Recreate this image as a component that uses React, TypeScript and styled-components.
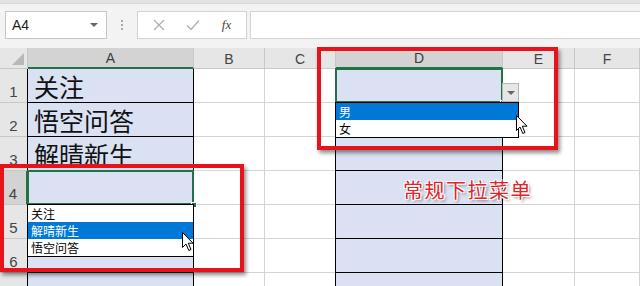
import React from "react";
import styled, { createGlobalStyle } from "styled-components";

const GlobalStyle = createGlobalStyle`
  html, body {
    margin: 0;
    padding: 0;
    background: #ffffff;
    overflow: hidden;
  }
  * { box-sizing: border-box; }
`;

const Page = styled.div`
  position: relative;
  width: 640px;
  height: 286px;
  overflow: hidden;
  background: #ffffff;
  font-family: "Liberation Sans", "Noto Sans CJK SC", sans-serif;
`;

const TopStrip = styled.div`
  height: 4px;
  background: #e3e3e3;
  border-bottom: 1px solid #d6d6d6;
`;

const Toolbar = styled.div`
  height: 44px;
  background: #f3f3f3;
  display: flex;
  align-items: flex-start;
  padding: 7px 0 0 5px;
`;

const NameBox = styled.div`
  width: 102px;
  height: 28px;
  background: #fff;
  border: 1px solid #c6c6c6;
  display: flex;
  align-items: center;
  justify-content: space-between;
  padding: 0 8px 0 6px;
  font-size: 14px;
  color: #222;
`;

const Caret = styled.span`
  width: 0;
  height: 0;
  border-left: 4px solid transparent;
  border-right: 4px solid transparent;
  border-top: 4px solid #666;
`;

const Dots = styled.div`
  width: 30px;
  height: 28px;
  display: flex;
  flex-direction: column;
  align-items: center;
  justify-content: center;
  gap: 2px;
  span {
    width: 2px;
    height: 2px;
    background: #a8a8a8;
  }
`;

const FxBox = styled.div`
  width: 110px;
  height: 28px;
  background: #fff;
  border: 1px solid #d4d4d4;
  display: flex;
  align-items: center;
  justify-content: space-around;
  padding: 0 4px;
  color: #b4b4b4;
`;

const FxText = styled.span`
  font-family: "Liberation Serif", serif;
  font-style: italic;
  font-size: 13px;
  color: #444;
`;

const Formula = styled.div`
  flex: 1;
  height: 28px;
  margin-left: 3px;
  background: #fff;
  border: 1px solid #d4d4d4;
  border-right: none;
`;

const Sheet = styled.div`
  display: grid;
  grid-template-columns: 28px 166px 71px 71px 167px 72px 1fr;
  grid-template-rows: 21px repeat(7, 34px);
`;

const Corner = styled.div`
  position: relative;
  background: #e6e6e6;
  border-right: 1px solid #c8c8c8;
  border-bottom: 1px solid #c8c8c8;
  &::after {
    content: "";
    position: absolute;
    right: 3px;
    bottom: 3px;
    width: 0;
    height: 0;
    border-left: 12px solid transparent;
    border-bottom: 12px solid #b8b8b8;
  }
`;

const ColHead = styled.div<{ $sel?: boolean }>`
  background: ${(p) => (p.$sel ? "#d3d3d3" : "#e6e6e6")};
  border-right: 1px solid #c8c8c8;
  border-bottom: ${(p) => (p.$sel ? "2px solid #217346" : "1px solid #c8c8c8")};
  display: flex;
  align-items: center;
  justify-content: center;
  font-size: 14px;
  color: ${(p) => (p.$sel ? "#3c3c3c" : "#444")};
  padding-top: 1px;
`;

const RowHead = styled.div<{ $sel?: boolean }>`
  background: ${(p) => (p.$sel ? "#d3d3d3" : "#e6e6e6")};
  border-right: ${(p) => (p.$sel ? "2px solid #217346" : "1px solid #c8c8c8")};
  border-bottom: 1px solid #c8c8c8;
  display: flex;
  align-items: flex-end;
  justify-content: center;
  padding-bottom: 2px;
  font-size: 15px;
  color: #444;
`;

const Cell = styled.div<{ $fill?: boolean; $sel?: boolean }>`
  position: relative;
  background: ${(p) => (p.$fill ? "#d9e1f2" : "#fff")};
  border-right: 1px solid ${(p) => (p.$fill ? "#000" : "#d4d4d4")};
  border-bottom: 1px solid ${(p) => (p.$fill ? "#000" : "#d4d4d4")};
  box-shadow: ${(p) => (p.$fill ? "-1px 0 0 #000" : "none")};
  font-family: "Noto Sans CJK SC", sans-serif;
  font-size: 25px;
  line-height: 34px;
  color: #111;
  padding-left: 6px;
  white-space: nowrap;
  ${(p) =>
    p.$sel &&
    `
    &::after {
      content: "";
      position: absolute;
      left: -1px;
      top: -1px;
      right: -1px;
      bottom: -1px;
      border: 2px solid #217346;
      pointer-events: none;
    }
  `}
`;

const Handle = styled.span`
  position: absolute;
  right: -4px;
  bottom: -4px;
  width: 6px;
  height: 6px;
  background: #217346;
  border: 1px solid #fff;
  z-index: 2;
`;

const List = styled.div<{ $w: number }>`
  position: absolute;
  left: -1px;
  top: 100%;
  width: ${(p) => p.$w}px;
  background: #fff;
  border: 1px solid #000;
  z-index: 3;
  padding: 0;
`;

const Item = styled.div<{ $hi?: boolean }>`
  height: 17px;
  line-height: 17px;
  padding-left: 3px;
  font-family: "Noto Sans CJK SC", sans-serif;
  font-size: 12px;
  background: ${(p) => (p.$hi ? "#0078d7" : "#fff")};
  color: ${(p) => (p.$hi ? "#fff" : "#000")};
`;

const DropButton = styled.div`
  position: absolute;
  left: 100%;
  bottom: 0;
  width: 17px;
  height: 19px;
  background: #e6e6e6;
  border: 1px solid #b5b5b5;
  display: flex;
  align-items: center;
  justify-content: center;
  z-index: 3;
`;

const Callout = styled.div<{ $x: number; $y: number; $w: number; $h: number }>`
  position: absolute;
  left: ${(p) => p.$x}px;
  top: ${(p) => p.$y}px;
  width: ${(p) => p.$w}px;
  height: ${(p) => p.$h}px;
  border: 4px solid #e8121a;
  box-shadow: 2px 3px 4px rgba(0, 0, 0, 0.45);
  z-index: 5;
`;

const Label = styled.div`
  position: absolute;
  left: 403px;
  top: 175px;
  font-family: "Noto Sans CJK SC", sans-serif;
  font-size: 20px;
  letter-spacing: 1.5px;
  color: #e2232a;
  text-shadow: 0 0 1px #fff, 1px 1px 0 #fff, -1px -1px 0 #fff, 1px -1px 0 #fff,
    -1px 1px 0 #fff, 2px 2px 3px rgba(0, 0, 0, 0.5);
  z-index: 6;
`;

const Pointer = styled.svg<{ $x: number; $y: number }>`
  position: absolute;
  left: ${(p) => p.$x}px;
  top: ${(p) => p.$y}px;
  z-index: 7;
`;

const Cursor = ({ x, y }: { x: number; y: number }) => (
  <Pointer $x={x} $y={y} width="13" height="20" viewBox="0 0 13 20">
    <path
      d="M0.5 0.5 L0.5 15.5 L4 12 L6.8 18.5 L9 17.5 L6.3 11.2 L11 11.2 Z"
      fill="#fff"
      stroke="#000"
      strokeWidth="1"
      strokeLinejoin="round"
    />
  </Pointer>
);

const cols = ["A", "B", "C", "D", "E", "F"];
const aText = ["关注", "悟空问答", "解晴新生", "", "", "", ""];

export default function App() {
  return (
    <Page>
      <GlobalStyle />
      <TopStrip />
      <Toolbar>
        <NameBox>
          A4
          <Caret />
        </NameBox>
        <Dots>
          <span />
          <span />
          <span />
        </Dots>
        <FxBox>
          <svg width="12" height="12" viewBox="0 0 12 12">
            <path d="M1 1 L11 11 M11 1 L1 11" stroke="#b0b0b0" strokeWidth="1.3" />
          </svg>
          <svg width="14" height="12" viewBox="0 0 14 12">
            <path d="M1 6.5 L5 10.5 L13 1.5" stroke="#b0b0b0" strokeWidth="1.3" fill="none" />
          </svg>
          <FxText>fx</FxText>
        </FxBox>
        <Formula />
      </Toolbar>
      <Sheet>
        <Corner />
        {cols.map((c) => (
          <ColHead key={c} $sel={c === "A" || c === "D"}>
            {c}
          </ColHead>
        ))}
        {aText.map((t, i) => {
          const row = i + 1;
          return (
            <React.Fragment key={row}>
              {/* row 7 is cut by the window edge; its number sits below */}
              <RowHead $sel={row === 4}>{row < 7 ? row : ""}</RowHead>
              <Cell $fill $sel={row === 4}>
                {t}
                {row === 4 && (
                  <>
                    <Handle />
                    <List $w={167}>
                      <Item>关注</Item>
                      <Item $hi>解晴新生</Item>
                      <Item>悟空问答</Item>
                    </List>
                  </>
                )}
              </Cell>
              <Cell />
              <Cell />
              <Cell $fill $sel={row === 1}>
                {row === 1 && (
                  <>
                    <Handle />
                    <DropButton>
                      <Caret />
                    </DropButton>
                    <List $w={184}>
                      <Item $hi>男</Item>
                      <Item>女</Item>
                    </List>
                  </>
                )}
              </Cell>
              <Cell />
              <Cell />
            </React.Fragment>
          );
        })}
      </Sheet>
      <Callout $x={0} $y={164} $w={244} $h={108} />
      <Callout $x={317} $y={47} $w={241} $h={103} />
      <Label>常规下拉菜单</Label>
      <Cursor x={182} y={232} />
      <Cursor x={516} y={115} />
    </Page>
  );
}
